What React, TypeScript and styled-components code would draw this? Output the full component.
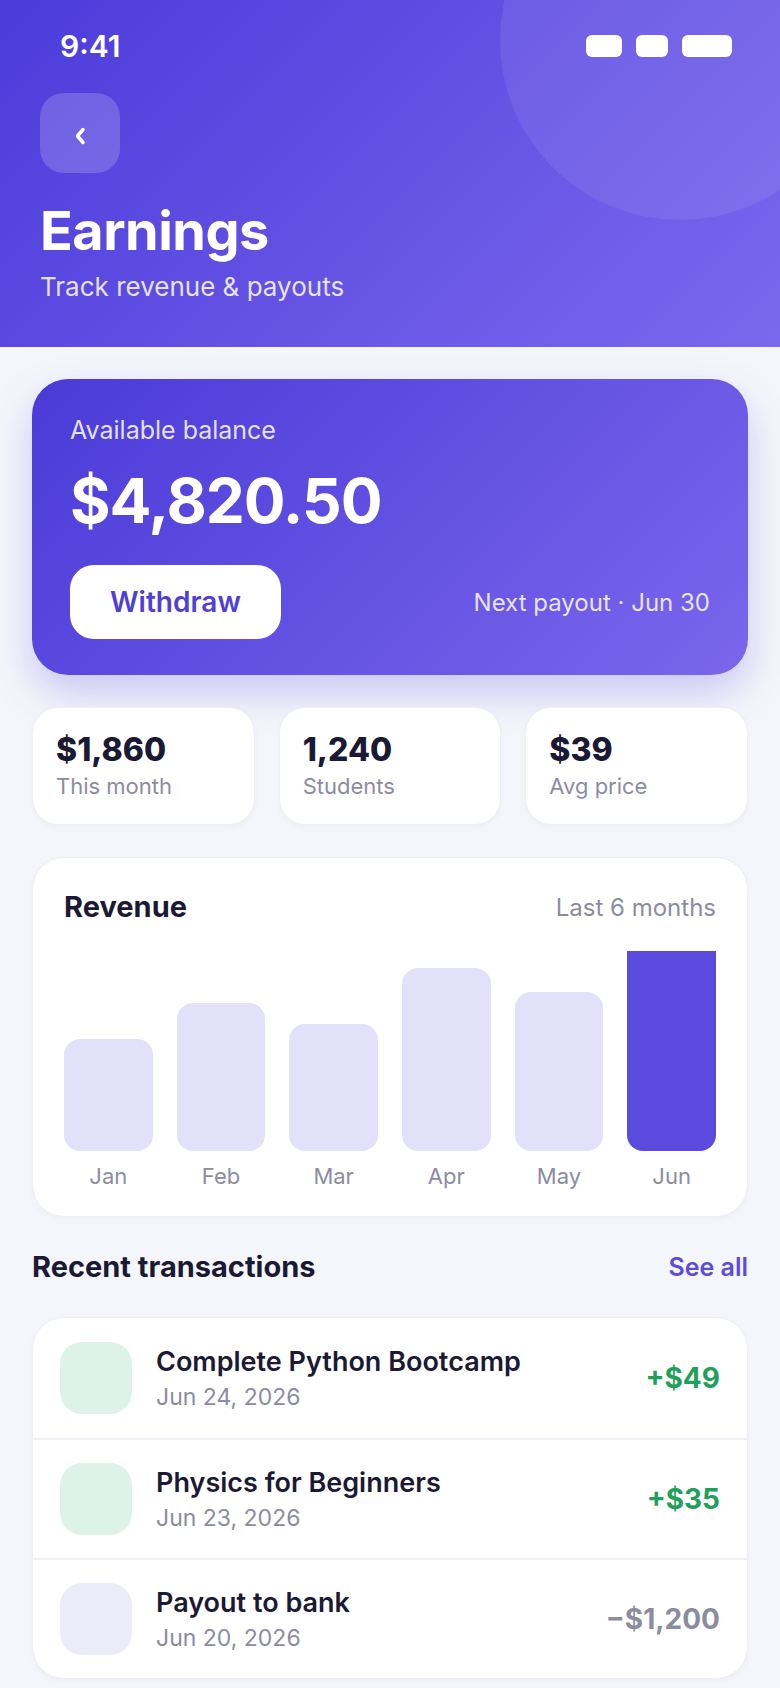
import styled, { createGlobalStyle } from "styled-components";

const GlobalStyle = createGlobalStyle`
  * {
    box-sizing: border-box;
  }
  body {
    margin: 0;
    background: #f5f6fb;
    font-family: Inter, "Noto Sans", "Liberation Sans", sans-serif;
    -webkit-font-smoothing: antialiased;
  }
`;

const Page = styled.div`
  width: 780px;
  min-height: 1688px;
  background: #f5f6fb;
  overflow: hidden;
`;

const Header = styled.header`
  position: relative;
  overflow: hidden;
  background: linear-gradient(135deg, #4b3bda 0%, #7c68ee 100%);
  padding-bottom: 43px;
`;

const Bubble = styled.div`
  position: absolute;
  top: -140px;
  right: -80px;
  width: 360px;
  height: 360px;
  border-radius: 50%;
  background: rgba(255, 255, 255, 0.08);
`;

const StatusBar = styled.div`
  position: relative;
  height: 92px;
  display: flex;
  align-items: center;
  justify-content: space-between;
  padding: 0 48px 0 60px;
`;

const Time = styled.span`
  color: #fff;
  font-size: 30px;
  font-weight: 600;
`;

const StatusIcons = styled.div`
  display: flex;
  gap: 14px;
`;

const StatusPill = styled.span<{ w: number }>`
  display: block;
  width: ${(p) => p.w}px;
  height: 22px;
  border-radius: 6px;
  background: #fff;
`;

const HeaderBody = styled.div`
  position: relative;
  padding: 1px 40px 0;
`;

const BackButton = styled.button`
  width: 80px;
  height: 80px;
  border: none;
  border-radius: 24px;
  background: rgba(255, 255, 255, 0.18);
  display: flex;
  align-items: center;
  justify-content: center;
  padding: 6px 0 0;
  cursor: pointer;
`;

const Title = styled.h1`
  margin: 24px 0 0;
  color: #fff;
  font-size: 54px;
  line-height: 67px;
  font-weight: 700;
  letter-spacing: -0.5px;
`;

const Subtitle = styled.p`
  margin: 6px 0 0;
  color: rgba(255, 255, 255, 0.85);
  font-size: 26px;
  line-height: 34px;
`;

const Content = styled.main`
  padding: 0 32px;
`;

const BalanceCard = styled.section`
  margin-top: 32px;
  padding: 35px 38px 36px;
  border-radius: 36px;
  background: linear-gradient(135deg, #4a3bd8 0%, #7b66ec 100%);
  box-shadow: 0 18px 40px rgba(91, 75, 221, 0.28);
  color: #fff;
`;

const BalanceLabel = styled.div`
  font-size: 25px;
  line-height: 32px;
  color: rgba(255, 255, 255, 0.85);
`;

const BalanceAmount = styled.div`
  margin-top: 18px;
  font-size: 62px;
  line-height: 74px;
  font-weight: 700;
  letter-spacing: -1px;
`;

const BalanceFooter = styled.div`
  margin-top: 27px;
  display: flex;
  align-items: center;
  justify-content: space-between;
`;

const WithdrawButton = styled.button`
  height: 74px;
  padding: 0 40px;
  border: none;
  border-radius: 24px;
  background: #fff;
  color: #4f3fd6;
  font-family: inherit;
  font-size: 28px;
  font-weight: 600;
  cursor: pointer;
`;

const NextPayout = styled.span`
  font-size: 24px;
  color: rgba(255, 255, 255, 0.85);
`;

const StatsRow = styled.div`
  margin-top: 32px;
  display: grid;
  grid-template-columns: repeat(3, 1fr);
  gap: 24px;
`;

const StatCard = styled.div`
  background: #fff;
  border: 1px solid #eeeef6;
  border-radius: 26px;
  padding: 23px 23px 25px;
  box-shadow: 0 2px 6px rgba(30, 30, 80, 0.03);
`;

const StatValue = styled.div`
  font-size: 32px;
  line-height: 38px;
  font-weight: 800;
  color: #1b1a35;
`;

const StatLabel = styled.div`
  margin-top: 4px;
  font-size: 22px;
  line-height: 26px;
  color: #8c8ca1;
`;

const Card = styled.section`
  background: #fff;
  border: 1px solid #eeeef6;
  border-radius: 32px;
  box-shadow: 0 2px 6px rgba(30, 30, 80, 0.03);
`;

const RevenueCard = styled(Card)`
  margin-top: 32px;
  padding: 31px 31px 27px;
`;

const CardHeader = styled.div`
  display: flex;
  align-items: center;
  justify-content: space-between;
`;

const CardTitle = styled.h2`
  margin: 0;
  font-size: 29px;
  line-height: 36px;
  font-weight: 700;
  color: #1b1a35;
`;

const Muted = styled.span`
  font-size: 24px;
  color: #8c8ca1;
`;

const Chart = styled.div`
  margin-top: 26px;
  display: grid;
  grid-template-columns: repeat(6, 1fr);
  gap: 24px;
`;

const BarColumn = styled.div`
  display: flex;
  flex-direction: column;
  align-items: stretch;
`;

const BarTrack = styled.div`
  height: 200px;
  display: flex;
  align-items: flex-end;
  overflow: hidden;
`;

const Bar = styled.div<{ active: boolean }>`
  flex: none;
  width: 100%;
  border-radius: 16px;
  background: ${(p) => (p.active ? "#5a4ade" : "#e3e0fa")};
`;

const Month = styled.span`
  margin-top: 12px;
  text-align: center;
  font-size: 22px;
  line-height: 26px;
  color: #8c8ca1;
`;

const SectionHeader = styled.div`
  margin-top: 32px;
  display: flex;
  align-items: center;
  justify-content: space-between;
`;

const SeeAll = styled.a`
  font-size: 25px;
  font-weight: 600;
  color: #5b4ddb;
  text-decoration: none;
  cursor: pointer;
`;

const TxList = styled(Card)`
  margin-top: 32px;
  overflow: hidden;
`;

const TxRow = styled.div`
  display: flex;
  align-items: center;
  gap: 24px;
  height: 120px;
  padding: 0 27px;
  & + & {
    border-top: 2px solid #f0f0f6;
  }
`;

const TxIcon = styled.div<{ tone: "green" | "gray" }>`
  flex: none;
  width: 72px;
  height: 72px;
  border-radius: 22px;
  background: ${(p) => (p.tone === "green" ? "#ddf3e9" : "#ececf8")};
`;

const TxInfo = styled.div`
  flex: 1;
  min-width: 0;
`;

const TxTitle = styled.div`
  font-size: 27px;
  line-height: 34px;
  font-weight: 600;
  color: #1b1a35;
`;

const TxDate = styled.div`
  margin-top: 3px;
  font-size: 23px;
  line-height: 30px;
  color: #8c8ca1;
`;

const TxAmount = styled.span<{ positive: boolean }>`
  font-size: 28px;
  font-weight: 700;
  color: ${(p) => (p.positive ? "#21a05a" : "#8c8ca1")};
`;

const months = [
  { label: "Jan", value: 56 },
  { label: "Feb", value: 74 },
  { label: "Mar", value: 63.5 },
  { label: "Apr", value: 91.5 },
  { label: "May", value: 79.5 },
  { label: "Jun", value: 110 },
];

const transactions = [
  { title: "Complete Python Bootcamp", date: "Jun 24, 2026", amount: "+$49", positive: true },
  { title: "Physics for Beginners", date: "Jun 23, 2026", amount: "+$35", positive: true },
  { title: "Payout to bank", date: "Jun 20, 2026", amount: "−$1,200", positive: false },
];

function App() {
  return (
    <Page>
      <GlobalStyle />
      <Header>
        <Bubble />
        <StatusBar>
          <Time>9:41</Time>
          <StatusIcons>
            <StatusPill w={36} />
            <StatusPill w={32} />
            <StatusPill w={50} />
          </StatusIcons>
        </StatusBar>
        <HeaderBody>
          <BackButton aria-label="Back">
            <svg width="12" height="18" viewBox="0 0 12 18">
              <polyline
                points="9,2.5 3.5,9 9,15.5"
                fill="none"
                stroke="#fff"
                strokeWidth="3.5"
                strokeLinecap="round"
                strokeLinejoin="round"
              />
            </svg>
          </BackButton>
          <Title>Earnings</Title>
          <Subtitle>Track revenue &amp; payouts</Subtitle>
        </HeaderBody>
      </Header>

      <Content>
        <BalanceCard>
          <BalanceLabel>Available balance</BalanceLabel>
          <BalanceAmount>$4,820.50</BalanceAmount>
          <BalanceFooter>
            <WithdrawButton>Withdraw</WithdrawButton>
            <NextPayout>Next payout · Jun 30</NextPayout>
          </BalanceFooter>
        </BalanceCard>

        <StatsRow>
          <StatCard>
            <StatValue>$1,860</StatValue>
            <StatLabel>This month</StatLabel>
          </StatCard>
          <StatCard>
            <StatValue>1,240</StatValue>
            <StatLabel>Students</StatLabel>
          </StatCard>
          <StatCard>
            <StatValue>$39</StatValue>
            <StatLabel>Avg price</StatLabel>
          </StatCard>
        </StatsRow>

        <RevenueCard>
          <CardHeader>
            <CardTitle>Revenue</CardTitle>
            <Muted>Last 6 months</Muted>
          </CardHeader>
          <Chart>
            {months.map((m, i) => (
              <BarColumn key={m.label}>
                <BarTrack>
                  <Bar active={i === months.length - 1} style={{ height: `${m.value}%` }} />
                </BarTrack>
                <Month>{m.label}</Month>
              </BarColumn>
            ))}
          </Chart>
        </RevenueCard>

        <SectionHeader>
          <CardTitle>Recent transactions</CardTitle>
          <SeeAll>See all</SeeAll>
        </SectionHeader>

        <TxList>
          {transactions.map((tx) => (
            <TxRow key={tx.title}>
              <TxIcon tone={tx.positive ? "green" : "gray"} />
              <TxInfo>
                <TxTitle>{tx.title}</TxTitle>
                <TxDate>{tx.date}</TxDate>
              </TxInfo>
              <TxAmount positive={tx.positive}>{tx.amount}</TxAmount>
            </TxRow>
          ))}
        </TxList>
      </Content>
    </Page>
  );
}

export default App;
